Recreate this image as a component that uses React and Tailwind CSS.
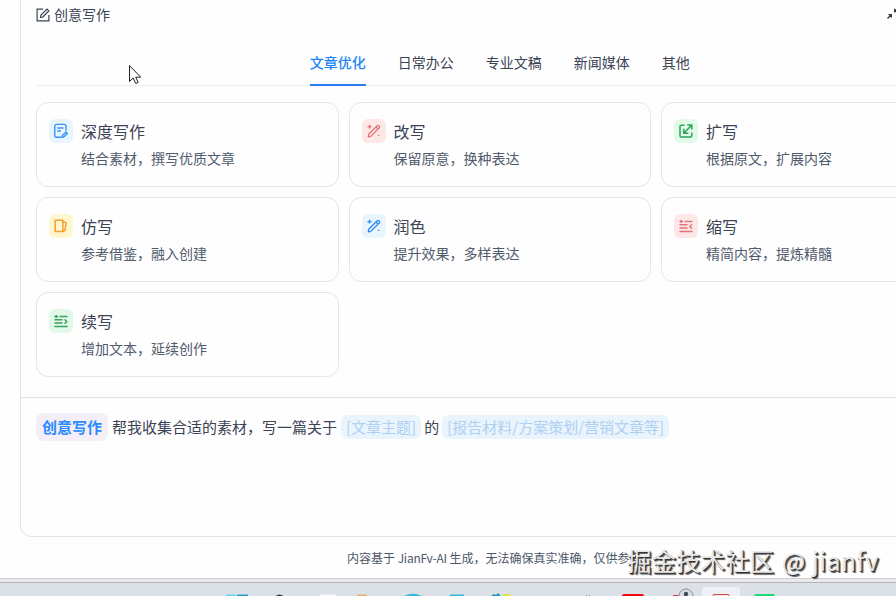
const line = {
  fill: 'none',
  stroke: 'currentColor',
  strokeWidth: 1.4,
  strokeLinecap: 'round',
  strokeLinejoin: 'round',
}

function NoteIcon() {
  return (
    <svg width="16" height="16" viewBox="0 0 16 16" {...line}>
      <path d="M7.5 14.3H3.6A1.8 1.8 0 0 1 1.8 12.5V3.2A1.8 1.8 0 0 1 3.6 1.4h7.6A1.8 1.8 0 0 1 13 3.2v4M4.8 5h5.2M4.8 8h2.6" />
      <path d="M9 14.4l.3-1.9 3.7-3.4 1.3 1.3-3.6 3.6z" />
    </svg>
  )
}

function WandIcon() {
  return (
    <svg width="16" height="16" viewBox="0 0 16 16" {...line} strokeWidth="1.3">
      <path d="M2.7 11.3l8.5-8.6a1.5 1.5 0 0 1 2.1 2.1l-8.5 8.6-2.5.4zM10 4l2 2" />
      <path d="M3.5 2.2v3M2 3.7h3M12.4 12.3h.4" />
    </svg>
  )
}

function ExpandIcon() {
  return (
    <svg width="16" height="16" viewBox="0 0 16 16" {...line} strokeWidth="1.5">
      <path d="M6 2.2H3.3A1.3 1.3 0 0 0 2 3.5v9.2A1.3 1.3 0 0 0 3.3 14h9.2a1.3 1.3 0 0 0 1.3-1.3V10" />
      <path d="M6 10l7.6-7.8M9.8 2h4v4M5.8 6.2v4h4" />
    </svg>
  )
}

function BookIcon() {
  return (
    <svg width="16" height="16" viewBox="0 0 16 16" {...line} strokeWidth="1.5">
      <path d="M2.2 2.2h7.6v11.4H2.2zM9.8 3.8l3.3.9-1.2 7.6-2.1 1.3" />
    </svg>
  )
}

function LinesIcon({ flip }) {
  return (
    <svg width="16" height="16" viewBox="0 0 16 16" {...line} strokeWidth="1.5">
      <path d="M2 3.5h2.4M3.2 2.5v2M7 3.5h7M2 6.8h7M2 10h7M2 13.4h12" />
      <path d={flip ? 'M13.6 6.7l-1.8 1.8 1.8 1.8' : 'M12 6.7l1.8 1.8-1.8 1.8'} />
    </svg>
  )
}

const tabs = ['文章优化', '日常办公', '专业文稿', '新闻媒体', '其他']

const cards = [
  { title: '深度写作', text: '结合素材，撰写优质文章', tone: 'bg-[#e9f5fd] text-[#3b93f5]', icon: <NoteIcon /> },
  { title: '改写', text: '保留原意，换种表达', tone: 'bg-[#fde8e6] text-[#e0747a]', icon: <WandIcon /> },
  { title: '扩写', text: '根据原文，扩展内容', tone: 'bg-[#e2fae8] text-[#2ba35a]', icon: <ExpandIcon /> },
  { title: '仿写', text: '参考借鉴，融入创建', tone: 'bg-[#fdf6cf] text-[#f5a02c]', icon: <BookIcon /> },
  { title: '润色', text: '提升效果，多样表达', tone: 'bg-[#e9f5fd] text-[#2f8af5]', icon: <WandIcon /> },
  { title: '缩写', text: '精简内容，提炼精髓', tone: 'bg-[#fee8e7] text-[#e0747a]', icon: <LinesIcon flip /> },
  { title: '续写', text: '增加文本，延续创作', tone: 'bg-[#e2f9ea] text-[#38a35c]', icon: <LinesIcon /> },
]

function Card({ title, text, tone, icon }) {
  return (
    <div className="flex h-[85px] gap-2 rounded-[12px] border border-[#e4e5e8] pl-3 pt-4">
      <div className={`flex size-6 shrink-0 items-center justify-center rounded-md ${tone}`}>{icon}</div>
      <div>
        <div className="text-[16px] leading-[24px] text-[#3b4354]">{title}</div>
        <div className="mt-[3px] text-[14px] leading-[24px] text-[#505b6c]">{text}</div>
      </div>
    </div>
  )
}

function Taskbar() {
  return (
    <div className="h-[18px] w-full shrink-0 border-t border-[#cfcfd2] bg-[#e9eaec] pt-[3px]">
      <div className="h-[14px] border-t border-[#b4b4b8] bg-[#dce1e7]">
        <svg className="block" width="896" height="13" viewBox="0 583 896 13">
          <path d="M226 594.5h10v2h-10z" fill="#6fd0f2" />
          <path d="M237 594.5h11v2h-11z" fill="#2a9fc4" />
          <path d="M275 596.5q4.500-4 9 0z" fill="#333" />
          <rect x="320" y="594.5" width="16" height="3" rx="1" fill="#fafafa" />
          <rect x="357" y="594.5" width="10" height="3" rx="1" fill="#e8b35c" />
          <ellipse cx="413" cy="600" rx="11" ry="6.300" fill="#32b9dc" />
          <rect x="450" y="594.5" width="14" height="3" fill="#35b4df" />
          <path d="M491 596l3-2 2 1 2-2 3 3z" fill="#1597ba" />
          <path d="M503 596v-2h7l1 2z" fill="#d9e63d" />
          <path d="M586 595h1v1h-1zM589 594.500h1v1.500h-1z" fill="#9aa0a8" />
          <rect x="622" y="594" width="22" height="4" rx="2" fill="#f00a10" />
          <path d="M673 595h7v1h-7z" fill="#d6424c" />
          <circle cx="686" cy="596" r="7" fill="#d9dde3" stroke="#8c929b" />
          <circle cx="686" cy="594" r="2.2" fill="#414d5c" />
          <rect x="702" y="587" width="38" height="12" rx="3" fill="#edf0f4" />
          <rect x="713" y="594.5" width="16" height="6" rx="1" fill="#f8e4e4" stroke="#d84a48" />
          <rect x="754" y="594" width="21" height="5" rx="2" fill="#20d874" />
        </svg>
      </div>
    </div>
  )
}

export default function App() {
  return (
    <div className="relative flex h-[596px] w-[896px] flex-col overflow-hidden bg-[#fefefe] font-['Noto_Sans_CJK_SC',sans-serif] text-[#3b4354]">
      <div className="ml-5 flex h-[537px] w-[960px] shrink-0 flex-col rounded-b-[12px] border border-t-0 border-[#e2e3e6]">
        <div className="flex h-[398px] flex-col border-b border-[#e2e3e6] pl-[15px]">
          <div className="flex h-[30px] w-[868px] items-center justify-between">
            <div className="flex items-center gap-1 text-[14px]">
              <svg width="14" height="14" viewBox="0 0 14 14" {...line} strokeWidth="1.2" strokeLinecap="butt" strokeLinejoin="miter">
                <path d="M7 1.2H1.1v11.7h11.8V7" />
                <path d="M4.6 9.4l.2-2.1 6.2-6.2 1.8 1.8-6.2 6.2z" />
              </svg>
              <span className="pb-[2px] leading-[28px]">创意写作</span>
            </div>
            <svg width="18" height="18" viewBox="0 0 18 18" fill="none" stroke="#333" strokeWidth="1.3">
              <path d="M1.500 12.500L5.500 8.500M2.500 8.700H5.300V11.500" />
              <path d="M12.500 1.500L8.800 5.200M8.700 2.800V5.600H11.500" />
            </svg>
          </div>
          <div className="flex h-14 w-[927.5px] items-stretch justify-center gap-8 border-b border-[#eceef0] text-[14px]">
            {tabs.map((tab, i) => (
              <div
                key={tab}
                className={
                  i === 0
                    ? '-mb-px border-b-2 border-[#2a7af0] pt-[21px] font-medium leading-[22px] text-[#2385f5]'
                    : 'pt-[21px] leading-[22px]'
                }
              >
                {tab}
              </div>
            ))}
          </div>
          <div className="mt-4 grid w-[927.5px] grid-cols-3 gap-[10px]">
            {cards.map((card) => (
              <Card key={card.title} {...card} />
            ))}
          </div>
        </div>
        <div className="flex items-center whitespace-nowrap pl-[15px] pt-[15px] text-[15px] leading-[26px]">
          <span className="rounded-lg bg-[#f4eef6] px-[6px] font-bold leading-[28px] text-[#2a8cff]">创意写作</span>
          <span className="ml-1">帮我收集合适的素材，写一篇关于</span>
          <span className="ml-1 rounded-md bg-[#e9f4fc] px-[5px] leading-6 text-[#aed0f2]">[文章主题]</span>
          <span className="ml-[3px]">的</span>
          <span className="ml-[3px] rounded-md bg-[#e9f4fc] px-[5px] leading-6 text-[#aed0f2]">[报告材料/方案策划/营销文章等]</span>
        </div>
      </div>
      <div className="ml-[347px] h-[41px] shrink-0 whitespace-nowrap pt-[11px] text-[12px] leading-5 text-[#4d5767]">
        内容基于 <span className="tracking-[-0.25px]">JianFv-AI</span> 生成，无法确保真实准确，仅供参考
      </div>
      <Taskbar />
      <div className="absolute left-[627px] top-[543px] whitespace-nowrap text-[24.5px] leading-9 text-[#e6e6e6] [text-shadow:1px_1px_0_#333,2px_2px_1px_#555]">
        掘金技术社区<span className="ml-[2px] tracking-[0.6px]"> @ jianfv</span>
      </div>
      <svg className="absolute left-[128px] top-[64px]" width="15" height="21" viewBox="0 0 15 21">
        <path d="M1.5 1.5v16l3.7-3.5 2.5 5.5 2.5-1.1-2.5-5.2h5z" fill="#fff" stroke="#222" />
      </svg>
    </div>
  )
}
